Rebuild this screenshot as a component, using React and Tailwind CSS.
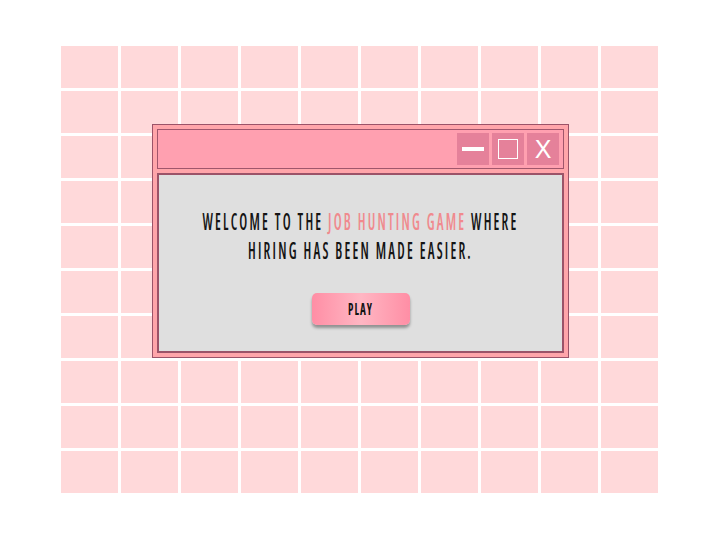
import React from "react";

const cells = Array.from({ length: 100 });

export default function App() {
  return (
    <div className="relative w-[720px] h-[540px] bg-white overflow-hidden">
      <div className="pt-[46px] pl-[61px]">
        <div className="grid grid-cols-[repeat(10,57px)] grid-rows-[repeat(10,42px)] gap-[3px]">
          {cells.map((_, i) => (
            <div key={i} className="bg-[#ffd9da]" />
          ))}
        </div>
      </div>

      <div className="absolute left-[152px] top-[124px] w-[417px] h-[234px] border border-[#9b5368] bg-[#ffa5aa] p-[4px] flex flex-col gap-[4px]">
        <div className="h-[40px] shrink-0 border-[1.5px] border-[#a0566c] bg-[#ffa0b0] flex items-center justify-end gap-[3px] pr-[4px]">
          <div className="w-[32px] h-[32px] bg-[#e5819a] flex items-center justify-center">
            <div className="w-[22px] h-[4px] bg-white" />
          </div>
          <div className="w-[32px] h-[32px] bg-[#e5819a] flex items-center justify-center">
            <div className="w-[20px] h-[20px] border border-white" />
          </div>
          <div className="w-[32px] h-[32px] bg-[#e5819a] flex items-center justify-center text-white text-[25px] leading-none font-['Liberation_Sans',Arial,sans-serif]">
            X
          </div>
        </div>
        <div className="flex-1 border-2 border-[#9b5368] bg-[#dfdfdf] flex flex-col items-center">
          <div className="mt-[33px] origin-top scale-y-[1.7] flex flex-col items-center text-[14px] leading-[16.5px] font-semibold font-stretch-condensed tracking-[2.2px] text-[#141414] font-['Open_Sans',sans-serif]">
            <p>
              WELCOME TO THE <span className="text-[#f08a8e]">JOB HUNTING GAME</span> WHERE
            </p>
            <p>HIRING HAS BEEN MADE EASIER.</p>
          </div>
          <button className="mt-[52px] w-[98px] h-[32px] rounded-[5px] bg-linear-to-r from-[#ff8ea5] via-[#ffb6c3] to-[#ff8ea5] shadow-[0_3px_3px_rgba(0,0,0,0.35)] flex items-center justify-center">
            <span className="inline-block scale-y-[1.4] text-[11px] font-bold font-stretch-condensed tracking-[1px] text-[#141414] font-['Open_Sans',sans-serif]">
              PLAY
            </span>
          </button>
        </div>
      </div>
    </div>
  );
}
